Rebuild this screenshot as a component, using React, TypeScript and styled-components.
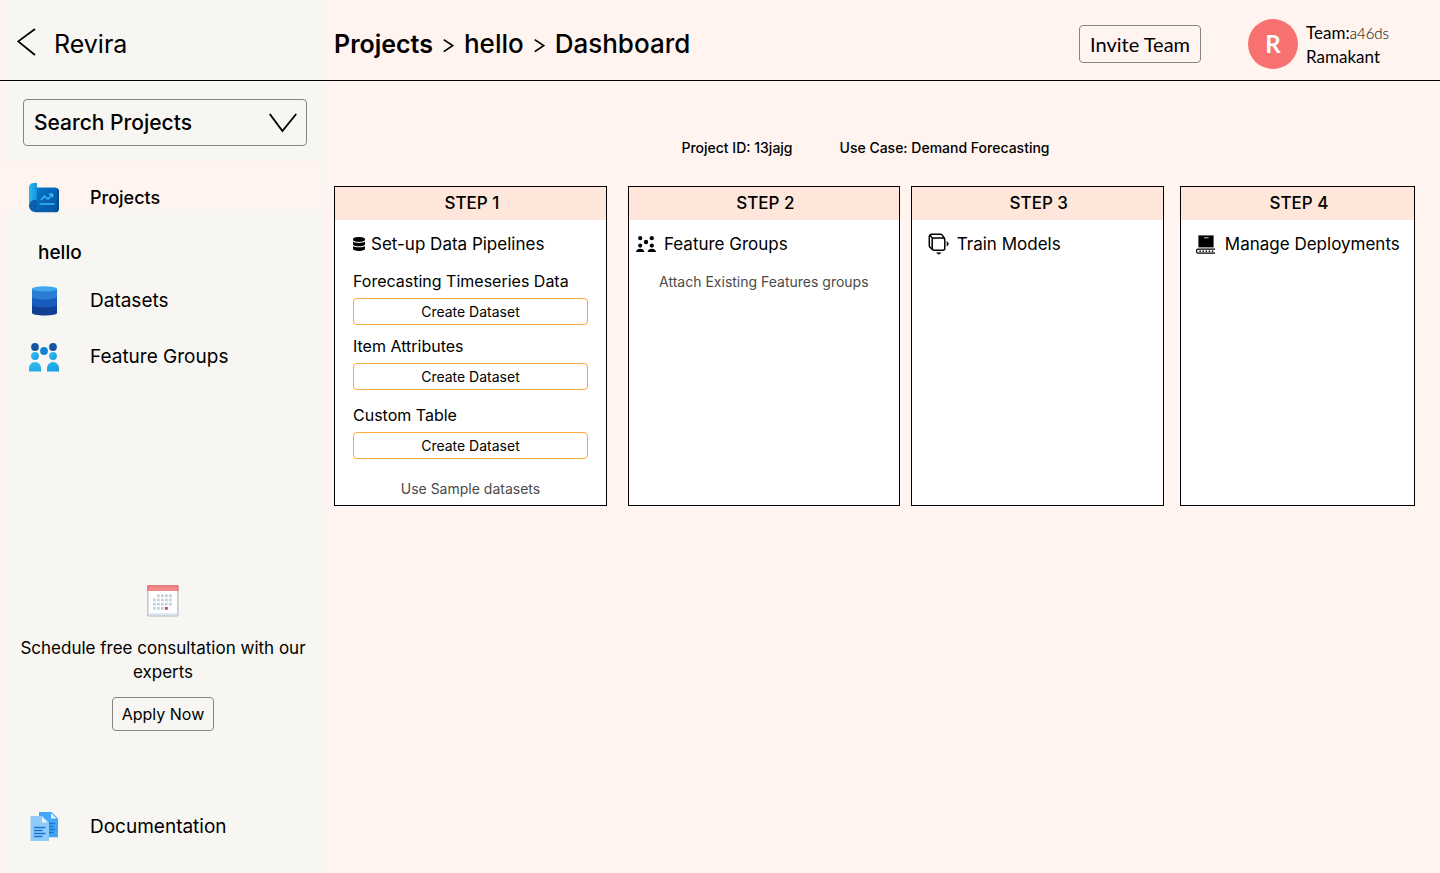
import React from "react";
import styled, { createGlobalStyle } from "styled-components";

const GlobalStyle = createGlobalStyle`
  *, *::before, *::after { box-sizing: border-box; }
  body {
    margin: 0;
    background: #fff4ef;
    color: #000;
    font-family: Inter, "Open Sans", sans-serif;
  }
  h1, h2, h3, p, ol, ul { margin: 0; padding: 0; font-weight: inherit; font-size: inherit; }
  ol, ul { list-style: none; }
  a { color: inherit; text-decoration: none; }
  button, select { font: inherit; color: inherit; cursor: pointer; }
  svg { display: block; flex: none; }
`;

const Page = styled.div`
  min-height: 100vh;
  display: flex;
  flex-direction: column;
`;

const Header = styled.header`
  display: flex;
  border-bottom: 1px solid #000;
`;

const Brand = styled.div`
  width: 321px;
  height: 80px;
  margin-left: 5px;
  margin-right: 8px;
  padding: 8px 0 0 12px;
  flex: none;
  display: flex;
  align-items: center;
  gap: 18px;
  background: #f7f6f2;
  font-size: 25px;
`;

const BackButton = styled.button`
  border: 0;
  padding: 0 0 4px;
  background: none;
`;

const TopBar = styled.div`
  flex: 1;
  display: flex;
  align-items: center;
  padding: 8px 51px 0 0;
`;

const Crumbs = styled.ol`
  display: flex;
  align-items: center;
  gap: 10px;
  margin-right: auto;
`;

const Crumb = styled.li<{ $root?: boolean }>`
  display: flex;
  align-items: center;
  gap: 10px;
  font-weight: ${(p) => (p.$root ? 600 : 500)};
  font-size: ${(p) => (p.$root ? "25px" : "26px")};
  line-height: 32px;
`;

const OutlineButton = styled.button<{ $large?: boolean }>`
  height: ${(p) => (p.$large ? "38px" : "34px")};
  padding: 0 ${(p) => (p.$large ? "10px" : "9px")};
  border: 1px solid #858585;
  border-radius: 4px;
  background: transparent;
  font-family: ${(p) => (p.$large ? "Lato, sans-serif" : "inherit")};
  font-size: ${(p) => (p.$large ? "20px" : "16px")};
`;

const User = styled.div`
  display: flex;
  align-items: center;
  gap: 8px;
  margin-left: 47px;
  font-family: Lato, sans-serif;
  font-size: 17px;
  line-height: 24px;
`;

const Avatar = styled.span`
  width: 50px;
  height: 50px;
  border-radius: 50%;
  background: #f87171;
  color: #fff;
  font-size: 24px;
  font-weight: 700;
  display: grid;
  place-items: center;
`;

const UserText = styled.div`
  padding-top: 2px;
`;

const TeamCode = styled.span`
  font-size: 15px;
  font-weight: 300;
`;

const Body = styled.div`
  flex: 1;
  display: flex;
`;

const Sidebar = styled.aside`
  width: 321px;
  margin-left: 5px;
  margin-right: 8px;
  flex: none;
  display: flex;
  flex-direction: column;
  background: #f7f6f2;
`;

const SearchBox = styled.label`
  display: grid;
  align-items: center;
  margin: 18px 19px 15px 18px;
  > * { grid-area: 1 / 1; }
  svg { justify-self: end; margin-right: 10px; pointer-events: none; }
`;

const ProjectSelect = styled.select`
  appearance: none;
  width: 100%;
  height: 47px;
  padding: 0 48px 0 10px;
  border: 1px solid #858585;
  border-radius: 4px;
  background: transparent;
  font-size: 21px;
  font-weight: 500;
`;

const NavLink = styled.a<{ $active?: boolean }>`
  display: flex;
  align-items: flex-start;
  height: ${(p) => (p.$active ? "48px" : "56px")};
  padding-top: ${(p) => (p.$active ? "22px" : "13px")};
  margin-right: 4px;
  background: ${(p) => (p.$active ? "#fff4ef" : "transparent")};
  font-weight: ${(p) => (p.$active ? 500 : 400)};
  font-size: ${(p) => (p.$active ? "18px" : "19px")};
  line-height: 30px;
`;

const NavIcon = styled.span`
  width: 61px;
  margin-left: 24px;
`;

const ProjectName = styled.h2`
  padding: 29px 0 5px 33px;
  font-size: 19px;
  font-weight: 500;
  line-height: 30px;
`;

const Consult = styled.section`
  display: flex;
  flex-direction: column;
  align-items: center;
  margin: auto 0 68px;
  padding-right: 5px;
  text-align: center;
  font-size: 17px;
  line-height: 24px;
  p { margin: 19px 0 13px; padding: 0 12px; }
`;

const SidebarFoot = styled.div`
  padding-bottom: 18px;
`;

const Main = styled.main`
  flex: 1;
  min-width: 0;
  padding: 57px 25px 32px 0;
`;

const Meta = styled.div`
  display: flex;
  justify-content: center;
  gap: 47px;
  padding-right: 18px;
  margin-bottom: 28px;
  font-size: 14px;
  font-weight: 500;
  line-height: 20px;
`;

const Steps = styled.div`
  display: flex;
`;

const Card = styled.section<{ $grow: number; $gap: number }>`
  flex: ${(p) => p.$grow} 1 0;
  min-width: 0;
  min-height: 320px;
  margin-left: ${(p) => p.$gap}px;
  border: 1px solid #000;
  background: #fff;
`;

const StepHead = styled.h2`
  padding-left: 3px;
  background: #ffe6da;
  text-align: center;
  font-size: 17px;
  font-weight: 500;
  line-height: 33px;
`;

const CardBody = styled.div<{ $pad: number }>`
  display: flex;
  flex-direction: column;
  padding: 12px 0 0 ${(p) => p.$pad}px;
`;

const CardTitle = styled.h3<{ $gap: number }>`
  display: flex;
  align-items: center;
  gap: ${(p) => p.$gap}px;
  font-size: 17px;
  line-height: 24px;
  white-space: nowrap;
`;

const Field = styled.div`
  display: flex;
  flex-direction: column;
  margin-top: 13px;
  margin-right: 18px;
  font-size: 16px;
  line-height: 24px;
  & + & { margin-top: 9px; }
  & + & + & { margin-top: 13px; }
`;

const CreateButton = styled.button`
  height: 27px;
  margin-top: 5px;
  padding: 0;
  border: 1px solid #ffa840;
  border-radius: 4px;
  background: #fff;
  font-size: 14px;
`;

const TextLink = styled.a<{ $space: number; $inset: number }>`
  align-self: center;
  margin-top: ${(p) => p.$space}px;
  margin-right: ${(p) => p.$inset}px;
  color: #4a4a4a;
  font-size: 14px;
  line-height: 20px;
`;

const CrumbArrow = () => (
  <svg width="11" height="16" viewBox="0 0 11 16" fill="none" stroke="#000" strokeWidth="1.7" aria-hidden="true">
    <path d="M.7 3.600 9.600 9.600.7 15.600" />
  </svg>
);

const BackIcon = () => (
  <svg width="19" height="28" viewBox="0 0 19 28" fill="none" stroke="#000" strokeWidth="1.8" aria-hidden="true">
    <path d="M18 1 1.200 13.400 18 27" />
  </svg>
);

const ChevronDown = () => (
  <svg width="28" height="20" viewBox="0 0 28 20" fill="none" stroke="#000" strokeWidth="1.9" aria-hidden="true">
    <path d="M.8 1 13.400 18 27.200 1" />
  </svg>
);

const ProjectsIcon = () => (
  <svg width="30" height="30" viewBox="0 0 30 30" aria-hidden="true">
    <defs>
      <linearGradient id="sheet" x1="0" y1="0" x2="1" y2="1">
        <stop offset="0" stopColor="#0878cd" />
        <stop offset="1" stopColor="#0352a0" />
      </linearGradient>
      <linearGradient id="roll" x1="0" y1="0" x2="1" y2="0">
        <stop offset="0" stopColor="#2cb8f0" />
        <stop offset="1" stopColor="#1492dc" />
      </linearGradient>
    </defs>
    <path d="M8 5h20l2 2v20l-2 2.300H6.500L3 26z" fill="#07488c" />
    <path d="M7 4.500h19.500A1.800 1.800 0 0 1 28.300 6.300V27H7z" fill="url(#sheet)" />
    <path d="M0 22a5.800 5.800 0 0 1 5.800-5.600A4.500 4.500 0 0 1 8 17v4.500L6 22l1 5.200h19V29H6.200A6 6 0 0 1 0 23z" fill="#0c5fae" />
    <path d="M0 22V4.500A4.500 4.500 0 0 1 4.500 0H8v17.200a6 6 0 0 0-8 4.800z" fill="url(#roll)" />
    <path d="m12 17 3.600-4 3.400 3.200 4-4.600M20 11.200h3.500v3.400" fill="none" stroke="#38bdf5" strokeWidth="1.400" />
    <path d="M11.500 21H25" stroke="#38bdf5" strokeWidth="1.700" strokeLinecap="round" />
  </svg>
);

const DatasetsIcon = () => (
  <svg width="30" height="30" viewBox="0 0 30 30" aria-hidden="true">
    <path d="M3 18v9c0 1.400 5.600 2.500 12.500 2.500S28 28.400 28 27v-9z" fill="#123f94" />
    <path d="M3 11v8c0 1.400 5.600 2.500 12.500 2.500S28 20.400 28 19v-8z" fill="#185abd" />
    <path d="M3 3v8c0 1.400 5.600 2.500 12.500 2.500S28 12.400 28 11V3z" fill="#2b7cd3" />
    <ellipse cx="15.500" cy="2.900" rx="12.500" ry="2.600" fill="#41a5ee" />
  </svg>
);

const GroupsIcon = () => (
  <svg width="30" height="30" viewBox="0 0 30 30" aria-hidden="true">
    <defs>
      <linearGradient id="person" x1="0" y1="0" x2="1" y2="1">
        <stop offset="0" stopColor="#36c0f2" />
        <stop offset="1" stopColor="#199be2" />
      </linearGradient>
    </defs>
    <circle cx="6" cy="5" r="3.900" fill="#1457a0" />
    <circle cx="24" cy="5" r="3.900" fill="#1457a0" />
    <circle cx="15" cy="9" r="3.900" fill="#0e83d6" />
    <g fill="url(#person)">
      <circle cx="6" cy="14" r="3.900" />
      <circle cx="24" cy="14" r="3.900" />
      <path d="M0 29.500V26a6 6 0 0 1 12 0v3.500zM18 29.500V26a6 6 0 0 1 12 0v3.500z" />
    </g>
  </svg>
);

const DocsIcon = () => (
  <svg width="30" height="30" viewBox="0 0 30 30" aria-hidden="true">
    <path d="M10 0h12.500L29 6.500v18.800H10z" fill="#42a5f5" />
    <path d="M22 1v5.500h5.600z" fill="#e1f5fe" />
    <path d="M20 11.500h6M20 14.500h4.500M20 17.500h6M20 20.500h4.500" stroke="#1976d2" strokeWidth="1.300" />
    <path d="M1.500 4h12L20 10.500V29H1.500z" fill="#90caf9" />
    <path d="M13 5v5.500h5.800z" fill="#e1f5fe" />
    <path d="M5 15.500h11.500M5 18.500h8.500M5 21.500h11.500M5 24.500h8.500" stroke="#1976d2" strokeWidth="1.300" />
  </svg>
);

const calendarDots = [
  [10, 14, 18, 22],
  [6, 10, 14, 18, 22],
  [6, 10, 14, 18, 22],
  [6, 10, 14],
];

const CalendarIcon = () => (
  <svg width="32" height="32" viewBox="0 0 32 32" aria-hidden="true">
    <path d="M.9.900h30v30H.9z" fill="#fff" stroke="#9aaabb" />
    <path d="M1.400 28.200h29v2.200h-29z" fill="#dce7ef" />
    <path d="M.4.400h31v5.600H.4z" fill="#f58a8a" />
    <path d="M.9 6V.9h30V6" fill="none" stroke="#d96a6d" />
    {calendarDots.map((row, r) =>
      row.map((x) => (
        <rect key={`${r}-${x}`} x={x} y={9.4 + r * 4.2} width="2.700" height="2.700" fill="#c2d0da" />
      ))
    )}
    <path d="M18 22h2.800v2.800H18z" fill="#dc3c42" />
  </svg>
);

const DatabaseIcon = () => (
  <svg width="12" height="14" viewBox="0 0 12 14" aria-hidden="true">
    <path d="M0 2.200C0 .9 2.700 0 6 0s6 .9 6 2.200v.6C12 4 9.300 4.900 6 4.900S0 4 0 2.800z" />
    <path d="M0 4.500c1.200 1 3.500 1.400 6 1.400s4.800-.4 6-1.400v2.700c0 1.200-2.700 2.100-6 2.100S0 8.400 0 7.200z" />
    <path d="M0 8.900c1.200 1 3.500 1.400 6 1.400s4.800-.4 6-1.400v2.900C12 13.100 9.300 14 6 14s-6-.9-6-2.200z" />
  </svg>
);

const GroupsGlyph = () => (
  <svg width="20" height="16" viewBox="0 0 20 16" aria-hidden="true">
    <circle cx="4.200" cy="2.200" r="2.100" />
    <circle cx="15.800" cy="2.200" r="2.100" />
    <circle cx="10" cy="6" r="2.200" />
    <circle cx="4.200" cy="9.600" r="2.100" />
    <circle cx="15.800" cy="9.600" r="2.100" />
    <path d="M0 16c.4-2.200 1.800-3.200 4.200-3.200S8 13.800 8.400 16zM11.600 16c.4-2.200 1.800-3.200 4.200-3.200s3.800 1 4.200 3.200z" />
  </svg>
);

const ModelIcon = () => (
  <svg width="22" height="22" viewBox="0 0 22 22" fill="none" stroke="#000" strokeWidth="1.500" aria-hidden="true">
    <rect x="4.200" y="5" width="12.600" height="12.200" rx="2" />
    <path d="M4.600 16.600 2 14.200A2 2 0 0 1 1.300 12.700V3.500A2.200 2.200 0 0 1 3.500 1.300h9.200a2 2 0 0 1 1.400.6l2.400 3.500M2 2.300l2.800 3.200" />
    <path d="M19 8.600 20.600 10.800 19 13z" fill="#000" strokeWidth=".6" />
    <path d="M8.600 19.800 10.800 21.200 13 19.800z" fill="#000" strokeWidth=".6" />
  </svg>
);

const DeployIcon = () => (
  <svg width="20" height="19" viewBox="0 0 20 19" aria-hidden="true">
    <path d="M2.400.4h15.200v12H2.400z" />
    <path d="M8 2.800h4.600" stroke="#aaa" strokeWidth="1.200" />
    <path d="M19 14.200H2.400a1.900 1.900 0 0 0 0 3.900H19" fill="none" stroke="#000" strokeWidth="1.200" />
    <path d="M3.400 16.200h14" stroke="#000" strokeWidth="1.400" strokeDasharray="1.400 1.700" />
  </svg>
);

const datasets = ["Forecasting Timeseries Data", "Item Attributes", "Custom Table"];

export default function App() {
  return (
    <Page>
      <GlobalStyle />
      <Header>
        <Brand>
          <BackButton aria-label="Back">
            <BackIcon />
          </BackButton>
          <h1>Revira</h1>
        </Brand>
        <TopBar>
          <Crumbs>
            <Crumb $root>
              <a href="#projects">Projects</a>
              <CrumbArrow />
            </Crumb>
            <Crumb>
              <a href="#hello">hello</a>
              <CrumbArrow />
            </Crumb>
            <Crumb>Dashboard</Crumb>
          </Crumbs>
          <OutlineButton $large>Invite Team</OutlineButton>
          <User>
            <Avatar>R</Avatar>
            <UserText>
              <p>
                Team:<TeamCode>a46ds</TeamCode>
              </p>
              <p>Ramakant</p>
            </UserText>
          </User>
        </TopBar>
      </Header>
      <Body>
        <Sidebar>
          <SearchBox>
            <ProjectSelect aria-label="Search Projects">
              <option>Search Projects</option>
            </ProjectSelect>
            <ChevronDown />
          </SearchBox>
          <nav>
            <NavLink href="#projects" $active>
              <NavIcon><ProjectsIcon /></NavIcon>
              Projects
            </NavLink>
            <ProjectName>hello</ProjectName>
            <NavLink href="#datasets">
              <NavIcon><DatasetsIcon /></NavIcon>
              Datasets
            </NavLink>
            <NavLink href="#groups">
              <NavIcon><GroupsIcon /></NavIcon>
              Feature Groups
            </NavLink>
          </nav>
          <Consult>
            <CalendarIcon />
            <p>Schedule free consultation with our experts</p>
            <OutlineButton>Apply Now</OutlineButton>
          </Consult>
          <SidebarFoot>
            <NavLink href="#docs">
              <NavIcon><DocsIcon /></NavIcon>
              Documentation
            </NavLink>
          </SidebarFoot>
        </Sidebar>
        <Main>
          <Meta>
            <p>Project ID: 13jajg</p>
            <p>Use Case: Demand Forecasting</p>
          </Meta>
          <Steps>
            <Card $grow={273} $gap={0}>
              <StepHead>STEP 1</StepHead>
              <CardBody $pad={18}>
                <CardTitle $gap={6}>
                  <DatabaseIcon />
                  Set-up Data Pipelines
                </CardTitle>
                {datasets.map((name) => (
                  <Field key={name}>
                    {name}
                    <CreateButton>Create Dataset</CreateButton>
                  </Field>
                ))}
                <TextLink href="#samples" $space={20} $inset={18}>Use Sample datasets</TextLink>
              </CardBody>
            </Card>
            <Card $grow={272} $gap={21}>
              <StepHead>STEP 2</StepHead>
              <CardBody $pad={7}>
                <CardTitle $gap={8}>
                  <GroupsGlyph />
                  Feature Groups
                </CardTitle>
                <TextLink href="#attach" $space={16} $inset={7}>Attach Existing Features groups</TextLink>
              </CardBody>
            </Card>
            <Card $grow={253} $gap={11}>
              <StepHead>STEP 3</StepHead>
              <CardBody $pad={16}>
                <CardTitle $gap={7}>
                  <ModelIcon />
                  Train Models
                </CardTitle>
              </CardBody>
            </Card>
            <Card $grow={235} $gap={16}>
              <StepHead>STEP 4</StepHead>
              <CardBody $pad={15}>
                <CardTitle $gap={9}>
                  <DeployIcon />
                  Manage Deployments
                </CardTitle>
              </CardBody>
            </Card>
          </Steps>
        </Main>
      </Body>
    </Page>
  );
}
